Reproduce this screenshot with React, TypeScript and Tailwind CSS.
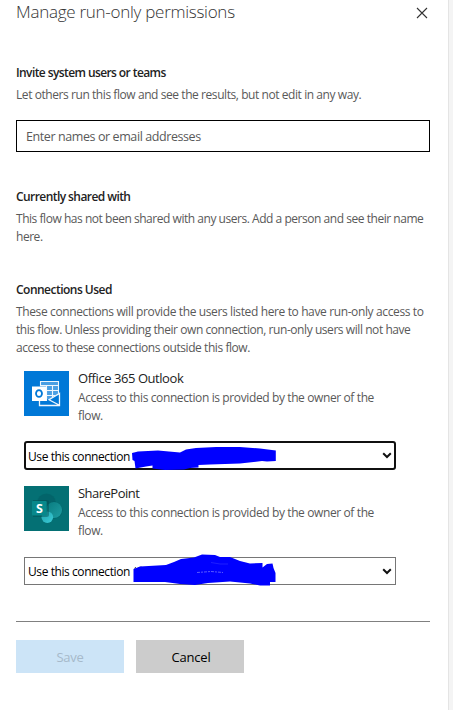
import React from "react";

function OutlookIcon() {
  return (
    <svg className="block h-[45px] w-[45px] shrink-0" viewBox="0 0 45 45">
      <rect width="45" height="45" fill="#0078d7" />
      <rect x="16" y="10" width="18.500" height="18" fill="#4a9fe3" />
      <path d="M16.500 15V10.500H34.500V25M16.500 14.500H34.500M22.500 14V31M28.500 14V28M22 19.500H34M22 24.500H32" fill="none" stroke="#eef6fd" strokeWidth="1.1" />
      <path d="M15 30H34V34H15Z M24 29L35 22.500V34Z" fill="#0078d7" />
      <path d="M15.500 30V34.500H35.500V22.500L25 28.700L35 34" fill="none" stroke="#eef6fd" strokeWidth="1.300" />
      <rect x="8" y="15.500" width="14.500" height="14.500" fill="#fff" />
      <ellipse cx="15" cy="22.500" rx="3" ry="3.400" fill="none" stroke="#0078d7" strokeWidth="1.800" />
    </svg>
  );
}

function SharePointIcon() {
  return (
    <svg className="block h-[45px] w-[45px] shrink-0" viewBox="0 0 45 45">
      <defs>
        <linearGradient id="sp-mid" x1="0" y1="0" x2="1" y2="1">
          <stop offset="0" stopColor="#087b7f" />
          <stop offset="1" stopColor="#1f9da2" />
        </linearGradient>
        <linearGradient id="sp-low" x1="0" y1="0" x2="1" y2="1">
          <stop offset="0" stopColor="#1fa3ad" />
          <stop offset="1" stopColor="#3ccbd6" />
        </linearGradient>
      </defs>
      <rect width="45" height="45" fill="#047074" />
      <circle cx="22.500" cy="17" r="9.600" fill="#036064" opacity=".5" />
      <circle cx="22.500" cy="16.800" r="8.800" fill="#03646a" />
      <circle cx="30" cy="24.200" r="8.500" fill="#02585c" opacity=".4" />
      <circle cx="30" cy="24" r="8" fill="url(#sp-mid)" />
      <circle cx="23.300" cy="31.200" r="5.800" fill="url(#sp-low)" />
      <path d="M9 14H22.500Q25 14 25 16V28.500Q25 31 22.500 31H9Z" fill="#024b50" opacity=".45" />
      <rect x="8" y="15" width="14.700" height="14.500" rx="1" fill="#07888b" />
      <text x="15.400" y="26.700" textAnchor="middle" fontSize="12.500" fontWeight="700" fill="#fff" fontFamily="Open Sans, sans-serif">S</text>
    </svg>
  );
}

function Chevron() {
  return (
    <svg className="h-[7px] w-[10px]" viewBox="0 0 10 7">
      <path d="M1.200 1.300L5 5L8.800 1.300" fill="none" stroke="#111" strokeWidth="2" />
    </svg>
  );
}

function OutlookScribble() {
  return (
    <svg className="absolute left-[132px] top-[446px] h-[26px] w-[146px]" viewBox="132 446 146 26">
      <path d="M132 453L138 451.500L158 450.500L180 452.500L186 449.500L196 448L216 447L240 447L260 448.500L275.800 450.500V461L267 461.500L262 461L240 463.500L210 464.500L198.500 465V467.500L190 468L184 469.500L165 470L152.500 468.500V465.500L146 466.500L135.500 468.500L134.500 461L132.500 460Z" fill="#00f" />
    </svg>
  );
}

function SharePointScribble() {
  return (
    <svg className="absolute left-[132px] top-[553px] h-[34px] w-[146px]" viewBox="132 553 146 34">
      <path d="M134.500 568.300L136 567.500M138.500 567.700L141.500 567" stroke="#222" strokeWidth="1" />
      <path d="M133.500 569L140 566.500L166 565L174 562L181 559L194 557.500L202 554.500L215 555L220 557L230 557L240 561L250 563.500L262.500 563V567.500L267 564L272.500 563.500L273.500 568L275.500 573V582L270 582V585.500L260 585.500L250 583.500L230 581.500L208 583L195 585L180 584L165 582L133.500 582Z" fill="#00f" />
      <path d="M211 562.500L220 564L228 564" fill="none" stroke="#33f" strokeWidth=".6" />
      <path d="M197 572.500L211 571.500L223 572.500" fill="none" stroke="#8080ff" strokeWidth=".7" strokeDasharray="3 1 2 1" />
    </svg>
  );
}

export default function App() {
  return (
    <div className="relative flex h-[710px] w-[453px] overflow-hidden bg-[#f4f4f4] font-['Open_Sans','Noto_Sans',sans-serif] text-xs leading-[18px] whitespace-nowrap text-[#595959]">
      <main className="flex w-[449px] flex-col border-r border-[#e4e4e4] bg-white pl-4 pr-[18px]">
        <header className="flex h-6 items-center justify-between">
          <h1 className="text-[17px] leading-6 font-light tracking-[-0.27px] text-[#333]">Manage run-only permissions</h1>
          <svg className="mt-[2px] mr-[2px] h-3 w-3" viewBox="0 0 12 12">
            <path d="M1 1L11 11M11 1L1 11" stroke="#333" strokeWidth="1.100" />
          </svg>
        </header>

        <section className="mt-10">
          <h2 className="font-semibold tracking-[-0.59px] text-[#222]">Invite system users or teams</h2>
          <p className="mt-1 tracking-[-0.43px]">Let others run this flow and see the results, but not edit in any way.</p>
          <div className="mt-4 flex h-8 w-[414px] items-center border border-black pt-[2px] pl-[9px]">
            <span className="text-[12.5px] tracking-[-0.41px]">Enter names or email addresses</span>
          </div>
        </section>

        <section className="mt-9">
          <h2 className="font-semibold tracking-[-0.57px] text-[#222]">Currently shared with</h2>
          <p className="mt-1 tracking-[-0.465px]">This flow has not been shared with any users. Add a person and see their name<br />here.</p>
        </section>

        <section className="mt-[35px]">
          <h2 className="font-semibold tracking-[-0.52px] text-[#222]">Connections Used</h2>
          <p className="mt-[4px] tracking-[-0.375px]">These connections will provide the users listed here to have run-only access to</p>
          <p className="tracking-[-0.435px]">this flow. Unless providing their own connection, run-only users will not have<br />access to these connections outside this flow.</p>
        </section>

        <div className="mt-[13px] ml-2 flex w-[372px] flex-col">
          <div className="flex h-[69px] gap-[9px]">
            <div className="pt-px"><OutlookIcon /></div>
            <div>
              <h3 className="-mt-px text-[13px] tracking-[-0.44px] text-[#222]">Office 365 Outlook</h3>
              <p className="mt-[2px] tracking-[-0.385px]">Access to this connection is provided by the owner of the<br />flow.</p>
            </div>
          </div>
          <div className="mt-[2px] flex h-[29px] items-center justify-between rounded-[3px] border-2 border-[#101010] pr-[2px] pl-[2px] text-black">
            <span className="mt-[2px] tracking-[-0.42px]">Use this connection</span>
            <Chevron />
          </div>
          <div className="mt-[15px] flex h-[69px] gap-[9px]">
            <div className="pt-px"><SharePointIcon /></div>
            <div>
              <h3 className="-mt-px text-[13px] tracking-[-0.52px] text-[#222]">SharePoint</h3>
              <p className="mt-[2px] tracking-[-0.385px]">Access to this connection is provided by the owner of the<br />flow.</p>
            </div>
          </div>
          <div className="mt-[3px] flex h-7 items-center justify-between border border-[#767676] pr-[3px] pl-[3px] text-black">
            <span className="mt-[2px] tracking-[-0.42px]">Use this connection</span>
            <Chevron />
          </div>
        </div>

        <hr className="mt-9 w-[414px] border-t border-[#808080]" />
        <footer className="mt-[18px] flex gap-3 text-[13px]">
          <button className="h-[33px] w-[108px] bg-[#cce4f7] pt-px tracking-[-0.25px] text-[#a6b9ca]">Save</button>
          <button className="h-[33px] w-[108px] bg-[#ccc] pt-px pl-[2px] tracking-[-0.2px] text-black">Cancel</button>
        </footer>
      </main>
      <OutlookScribble />
      <SharePointScribble />
    </div>
  );
}
